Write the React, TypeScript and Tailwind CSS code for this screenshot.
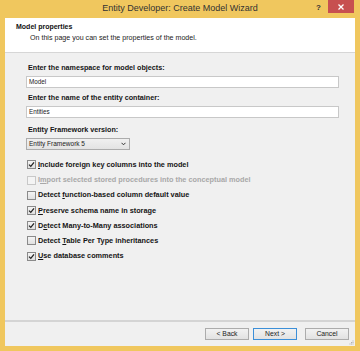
import React from "react";

const font = { fontFamily: '"Liberation Sans", Arial, sans-serif' };

function Check({ checked, disabled }: { checked?: boolean; disabled?: boolean }) {
  return (
    <div
      className={
        "w-[9px] h-[9px] shrink-0 border flex items-center justify-center " +
        (disabled
          ? "border-[#c8c8c8] bg-[#f4f4f4]"
          : "border-[#8a8a8a] bg-gradient-to-b from-[#f4f4f4] to-[#e0e0e0]")
      }
    >
      {checked && (
        <svg width="7" height="7" viewBox="0 0 7 7">
          <path d="M1 3.6 L2.8 5.4 L6 1.4" stroke="#222" strokeWidth="1.3" fill="none" />
        </svg>
      )}
    </div>
  );
}

function Row({
  checked,
  disabled,
  pre,
  u,
  post,
}: {
  checked?: boolean;
  disabled?: boolean;
  pre: string;
  u: string;
  post: string;
}) {
  return (
    <div className="h-[15.2px] flex items-center gap-[2px] pl-[1px]">
      <Check checked={checked} disabled={disabled} />
      <span
        className={
          "text-[7.3px] leading-[10px] font-bold " +
          (disabled ? "text-[#a8a8a8]" : "text-[#151515]")
        }
      >
        {pre}
        <span className="underline">{u}</span>
        {post}
      </span>
    </div>
  );
}

function Btn({ label, focus }: { label: string; focus?: boolean }) {
  return (
    <div
      className={
        "w-[44px] h-[12px] border flex items-center justify-center text-[6.8px] text-[#222] bg-gradient-to-b from-[#f2f2f2] to-[#e2e2e2] " +
        (focus ? "border-[#3c8fd8]" : "border-[#acacac]")
      }
    >
      {label}
    </div>
  );
}

export default function App() {
  return (
    <div style={font} className="w-[360px] h-[351px] bg-[#f0c75e] flex flex-col">
      {/* title bar */}
      <div className="h-[18px] flex items-start relative">
        <div className="flex-1 h-[18px] flex items-center justify-center text-[9px] text-[#333]">
          Entity Developer: Create Model Wizard
        </div>
        <div className="absolute right-[39px] top-[2px] text-[8px] font-bold text-[#333]">?</div>
        <div className="absolute right-[6px] top-0 w-[26px] h-[13px] bg-[#c75050] flex items-center justify-center">
          <svg width="6" height="6" viewBox="0 0 6 6">
            <path d="M0.5 0.5 L5.5 5.5 M5.5 0.5 L0.5 5.5" stroke="#fff" strokeWidth="1.3" />
          </svg>
        </div>
      </div>
      <div className="flex-1 mx-[5px] mb-[5px] flex flex-col bg-[#f0f0f0]">
        {/* header */}
        <div className="h-[35px] bg-white border-b border-[#d6d6d6] pl-[11px] pt-[4px]">
          <div className="text-[7px] leading-[10px] font-bold text-[#111]">Model properties</div>
          <div className="text-[7.1px] leading-[10px] text-[#222] pl-[14px] mt-[1px]">
            On this page you can set the properties of the model.
          </div>
        </div>
        {/* content */}
        <div className="flex-1 pl-[21px] pr-[16px] pt-[10px] flex flex-col">
          <div className="text-[7.2px] leading-[10px] font-bold text-[#151515] pl-[2px]">
            Enter the namespace for model objects:
          </div>
          <div className="mt-[3px] h-[12px] bg-white border border-[#c8c8c8] flex items-center pl-[2px] text-[6.3px] text-[#222]">
            Model
          </div>
          <div className="mt-[5px] text-[7.2px] leading-[10px] font-bold text-[#151515] pl-[2px]">
            Enter the name of the entity container:
          </div>
          <div className="mt-[3px] h-[12px] bg-white border border-[#c8c8c8] flex items-center pl-[2px] text-[6.3px] text-[#222]">
            Entities
          </div>
          <div className="mt-[7px] text-[7.2px] leading-[10px] font-bold text-[#151515] pl-[2px]">
            Entity Framework version:
          </div>
          <div className="mt-[3px] w-[104px] h-[12px] border border-[#acacac] bg-gradient-to-b from-[#f0f0f0] to-[#e3e3e3] flex items-center justify-between pl-[2px] pr-[3px] text-[6.5px] text-[#222]">
            <span>Entity Framework 5</span>
            <svg width="5" height="4" viewBox="0 0 5 4">
              <path d="M0.5 0.8 L2.5 2.8 L4.5 0.8" stroke="#333" strokeWidth="1" fill="none" />
            </svg>
          </div>
          <div className="mt-[7.4px] flex flex-col">
            <Row checked pre="" u="I" post="nclude foreign key columns into the model" />
            <Row disabled pre="I" u="m" post="port selected stored procedures into the conceptual model" />
            <Row pre="Detect " u="f" post="unction-based column default value" />
            <Row checked pre="" u="P" post="reserve schema name in storage" />
            <Row checked pre="D" u="e" post="tect Many-to-Many associations" />
            <Row pre="Detect " u="T" post="able Per Type inheritances" />
            <Row checked pre="" u="U" post="se database comments" />
          </div>
        </div>
        {/* footer */}
        <div className="h-[26px] border-t-2 border-[#d4d4d4] flex items-center justify-end pr-[6px] relative">
          <div className="flex items-center">
            <Btn label="< Back" />
            <div className="w-[4px]" />
            <Btn label="Next >" focus />
            <div className="w-[8px]" />
            <Btn label="Cancel" />
          </div>
          <div className="absolute right-[1px] bottom-[1px]">
            <svg width="5" height="5" viewBox="0 0 5 5">
              <rect x="3.5" y="0.5" width="1" height="1" fill="#b0b0b0" />
              <rect x="2" y="2" width="1" height="1" fill="#b0b0b0" />
              <rect x="3.5" y="2" width="1" height="1" fill="#b0b0b0" />
              <rect x="0.5" y="3.5" width="1" height="1" fill="#b0b0b0" />
              <rect x="2" y="3.5" width="1" height="1" fill="#b0b0b0" />
              <rect x="3.5" y="3.5" width="1" height="1" fill="#b0b0b0" />
            </svg>
          </div>
        </div>
      </div>
    </div>
  );
}
